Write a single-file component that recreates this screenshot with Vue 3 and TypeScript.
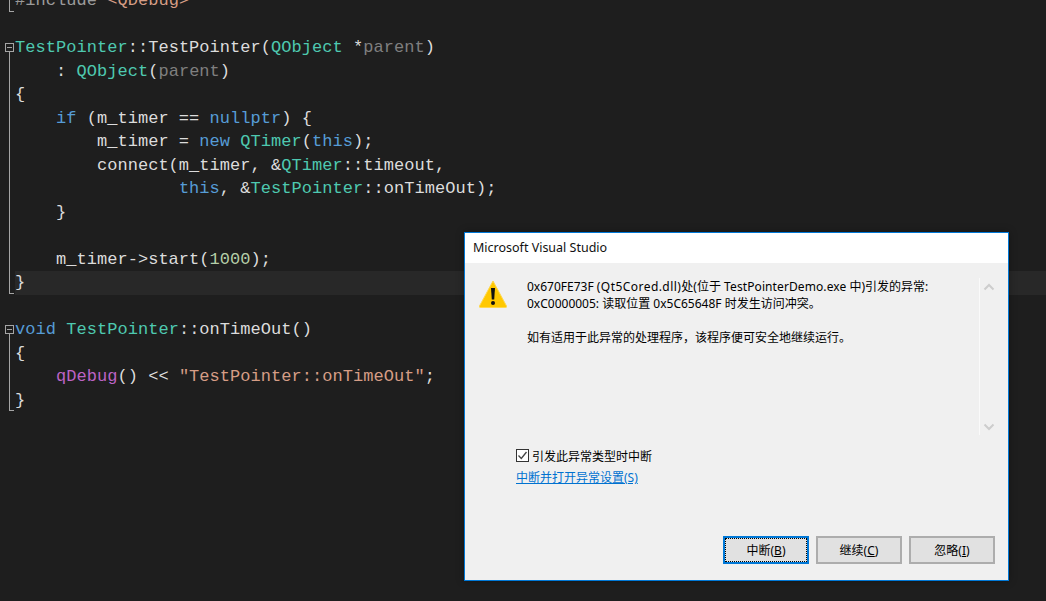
<script setup lang="ts">
type Fold = 'none' | 'box' | 'line' | 'end'
interface Seg { t: string; c?: string }
interface Line { fold: Fold; segs: Seg[]; current?: boolean }
const lines: Line[] = [
  { fold: 'end', segs: [{ t: '#include ', c: 'pre' }, { t: '<QDebug>', c: 'str' }] },
  { fold: 'none', segs: [] },
  { fold: 'box', segs: [{ t: 'TestPointer', c: 'type' }, { t: '::' }, { t: 'TestPointer' }, { t: '(' }, { t: 'QObject', c: 'type' }, { t: ' *' }, { t: 'parent', c: 'param' }, { t: ')' }] },
  { fold: 'line', segs: [{ t: '    : ' }, { t: 'QObject', c: 'type' }, { t: '(' }, { t: 'parent', c: 'param' }, { t: ')' }] },
  { fold: 'line', segs: [{ t: '{' }] },
  { fold: 'line', segs: [{ t: '    ' }, { t: 'if', c: 'kw' }, { t: ' (m_timer == ' }, { t: 'nullptr', c: 'kw' }, { t: ') {' }] },
  { fold: 'line', segs: [{ t: '        m_timer = ' }, { t: 'new', c: 'kw' }, { t: ' ' }, { t: 'QTimer', c: 'type' }, { t: '(' }, { t: 'this', c: 'kw' }, { t: ');' }] },
  { fold: 'line', segs: [{ t: '        connect(m_timer, &' }, { t: 'QTimer', c: 'type' }, { t: '::timeout,' }] },
  { fold: 'line', segs: [{ t: '                ' }, { t: 'this', c: 'kw' }, { t: ', &' }, { t: 'TestPointer', c: 'type' }, { t: '::onTimeOut);' }] },
  { fold: 'line', segs: [{ t: '    }' }] },
  { fold: 'line', segs: [] },
  { fold: 'line', segs: [{ t: '    m_timer->start(' }, { t: '1000', c: 'num' }, { t: ');' }] },
  { fold: 'end', segs: [{ t: '}' }], current: true },
  { fold: 'none', segs: [] },
  { fold: 'box', segs: [{ t: 'void', c: 'kw' }, { t: ' ' }, { t: 'TestPointer', c: 'type' }, { t: '::onTimeOut()' }] },
  { fold: 'line', segs: [{ t: '{' }] },
  { fold: 'line', segs: [{ t: '    ' }, { t: 'qDebug', c: 'macro' }, { t: '() << ' }, { t: '"TestPointer::onTimeOut"', c: 'str' }, { t: ';' }] },
  { fold: 'end', segs: [{ t: '}' }] },
]
</script>

<template>
  <div class="screen">
    <div class="editor">
      <div v-for="(line, i) in lines" :key="i" class="row">
        <div class="gutter" :class="line.fold">
          <span v-if="line.fold === 'box'" class="foldbox"></span>
        </div>
        <div class="code" :class="{ current: line.current }"><span v-for="(s, j) in line.segs" :key="j" :class="s.c">{{ s.t }}</span></div>
      </div>
    </div>

    <div class="dialog">
      <div class="titlebar">Microsoft Visual Studio</div>
      <div class="body">
        <div class="message-area">
          <svg class="warn" width="30" height="31" viewBox="0 0 30 31">
            <path d="M15 3 L1.500 28 Q1 29.500 2.500 29.500 L27.500 29.500 Q29 29.500 28.500 28 Z" fill="#ffc800" stroke="#ffd84d" stroke-width="1" stroke-linejoin="round" />
            <path d="M13 10 H17 L16.200 21.500 H13.800 Z" fill="#111" />
            <circle cx="15" cy="25" r="2" fill="#111" />
          </svg>
          <div class="message">
            <p>0x670FE73F <span class="wide">(Qt5Cored.dll)</span>处(位于 <span class="slight">TestPointerDemo.exe</span>  中)引发的异常:</p>
            <p>0xC0000005: 读取位置 0x5C65648F 时发生访问冲突。</p>
            <p class="gap">如有适用于此异常的处理程序，该程序便可安全地继续运行。</p>
          </div>
          <div class="scrollbar">
            <svg width="12" height="8" viewBox="0 0 12 8"><path d="M1.500 6.500 L6 2 L10.500 6.500" fill="none" stroke="#cdcdcd" stroke-width="2" /></svg>
            <svg width="12" height="8" viewBox="0 0 12 8"><path d="M1.500 1.500 L6 6 L10.500 1.500" fill="none" stroke="#cdcdcd" stroke-width="2" /></svg>
          </div>
        </div>
        <div class="options">
          <label class="check">
            <svg width="13" height="13" viewBox="0 0 13 13">
              <rect x="0.500" y="0.500" width="12" height="12" fill="#fff" stroke="#333" />
              <path d="M2.500 6.500 L5.300 9.500 L10.500 3" fill="none" stroke="#444" stroke-width="1.300" />
            </svg>
            <span>引发此异常类型时中断</span>
          </label>
          <a class="link">中断并打开异常设置(S)</a>
        </div>
        <div class="buttons">
          <button class="btn primary"><span class="focus">中断(<u>B</u>)</span></button>
          <button class="btn">继续(<u>C</u>)</button>
          <button class="btn">忽略(<u>I</u>)</button>
        </div>
      </div>
    </div>
  </div>
</template>

<style>
html, body { margin: 0; padding: 0; background: #1e1e1e; overflow: hidden; }
</style>

<style scoped>
.screen {
  position: relative;
  width: 1046px;
  height: 601px;
  background: #1e1e1e;
  overflow: hidden;
}
.editor {
  display: flex;
  flex-direction: column;
  margin-top: -11px;
  font-family: "Liberation Mono", monospace;
  font-size: 17px;
  letter-spacing: 0.04px;
  color: #dcdcdc;
}
.row {
  display: flex;
  height: 23.500px;
  line-height: 23.500px;
}
.gutter {
  position: relative;
  flex: none;
  width: 15px;
}
.gutter.line::before, .gutter.end::before {
  content: "";
  position: absolute;
  left: 9px;
  top: 0;
  bottom: 0;
  border-left: 1px solid #a5a5a5;
}
.gutter.end::before { bottom: 1px; width: 4px; border-bottom: 1px solid #a5a5a5; }
.gutter.box::after {
  content: "";
  position: absolute;
  left: 9px;
  top: 16px;
  bottom: 0;
  border-left: 1px solid #a5a5a5;
}
.foldbox {
  position: absolute;
  left: 5px;
  top: 7px;
  width: 7px;
  height: 7px;
  border: 1px solid #a5a5a5;
  box-sizing: content-box;
  background: linear-gradient(#a5a5a5, #a5a5a5) center / 5px 1px no-repeat;
}
.code {
  flex: 1;
  white-space: pre;
  box-sizing: border-box;
}
.code.current { background: #282828; }
.kw { color: #569cd6; }
.type { color: #4ec9b0; }
.param { color: #7f7f7f; }
.num { color: #b5cea8; }
.str { color: #d69d85; }
.macro { color: #bd63c5; }
.pre { color: #9b9b9b; }

.dialog {
  position: absolute;
  left: 464px;
  top: 232px;
  width: 545px;
  height: 349px;
  box-sizing: border-box;
  border: 1px solid #0078d7;
  display: flex;
  flex-direction: column;
  background: #f0f0f0;
  box-shadow: 0 0 8px rgba(0, 0, 0, 0.3);
  font-family: "Noto Sans", "Noto Sans CJK SC", sans-serif;
  font-size: 12px;
  color: #000;
}
.titlebar {
  flex: none;
  height: 30px;
  line-height: 29px;
  background: #fff;
  padding-left: 8px;
  font-size: 12.500px;
  color: #111;
}
.body {
  flex: 1;
  display: flex;
  flex-direction: column;
  min-height: 0;
}
.message-area {
  flex: none;
  display: flex;
  height: 157px;
  margin-top: 15px;
}
.warn {
  flex: none;
  margin-left: 13px;
}
.message {
  flex: 1;
  margin-left: 19px;
}
.message p {
  margin: 0;
  height: 17px;
  line-height: 17px;
  white-space: pre;
}
.message p.gap { margin-top: 17px; }
.wide { letter-spacing: 0.45px; }
.slight { letter-spacing: 0.1px; }
.scrollbar {
  flex: none;
  width: 18px;
  margin-right: 11px;
  border-left: 1px solid #fafafa;
  display: flex;
  flex-direction: column;
  justify-content: space-between;
  align-items: center;
  padding: 5px 0 4px;
  box-sizing: border-box;
}
.options {
  flex: none;
  margin-left: 51px;
  margin-top: 12px;
  display: flex;
  flex-direction: column;
  gap: 5px;
}
.check {
  display: flex;
  align-items: center;
  gap: 3px;
  height: 17px;
}
.link {
  height: 17px;
  line-height: 17px;
  color: #0072d0;
  text-decoration: underline;
}
.buttons {
  margin-top: auto;
  margin-bottom: 16px;
  margin-right: 13px;
  display: flex;
  justify-content: flex-end;
  gap: 7px;
}
.btn {
  width: 86px;
  height: 28px;
  padding: 0;
  box-sizing: border-box;
  border: 2px solid #adadad;
  background: #e1e1e1;
  color: #000;
  font: inherit;
  display: flex;
  align-items: center;
  justify-content: center;
}
.btn.primary {
  border-color: #0078d7;
}
.focus {
  flex: 1;
  align-self: stretch;
  border: 1px dotted #000;
  display: flex;
  align-items: center;
  justify-content: center;
  white-space: pre;
}
</style>
